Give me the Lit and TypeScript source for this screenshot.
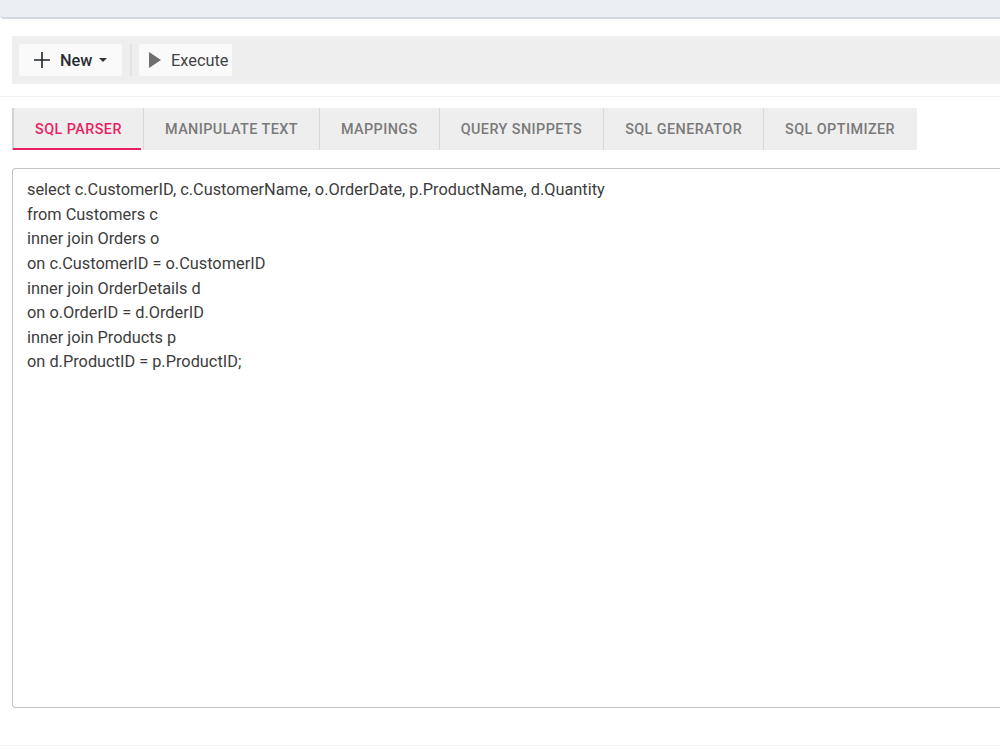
import { LitElement, html, css } from "lit";
import { customElement } from "lit/decorators.js";

const TABS = ["SQL PARSER", "MANIPULATE TEXT", "MAPPINGS", "QUERY SNIPPETS", "SQL GENERATOR", "SQL OPTIMIZER"];
const SQL = [
  "select c.CustomerID, c.CustomerName, o.OrderDate, p.ProductName, d.Quantity",
  "from Customers c",
  "inner join Orders o",
  "on c.CustomerID = o.CustomerID",
  "inner join OrderDetails d",
  "on o.OrderID = d.OrderID",
  "inner join Products p",
  "on d.ProductID = p.ProductID;",
];

@customElement("app-root")
export class AppRoot extends LitElement {
  static styles = css`
    :host { display: block; width: 1000px; height: 750px; overflow: hidden; background: #fff; font-family: Roboto, "Liberation Sans", sans-serif; color: #333; }
    .topbar { height: 17px; background: #ebeff3; border-bottom: 2px solid #d3d8e0; border-bottom-left-radius: 4px; }
    .main { padding: 17px 0 0 12px; }
    .toolbar { height: 48px; background: #eeeeee; display: flex; align-items: center; padding-left: 7px; box-sizing: border-box; }
    .btn { height: 32px; background: #fafafa; border-radius: 2px; display: flex; align-items: center; box-sizing: border-box; font-size: 16.33px; }
    .new { width: 103px; padding-left: 14px; gap: 9px; font-weight: 500; color: #2a2e33; }
    .caret { width: 0; height: 0; border-left: 4px solid transparent; border-right: 4px solid transparent; border-top: 4px solid #333; margin-left: -2px; }
    .sep { width: 2px; height: 32px; background: #e3e3e3; margin: 0 7px 0 8px; }
    .exec { width: 93px; padding-left: 10px; gap: 10px; color: #444; }
    .rule { height: 1px; background: #f1f1f1; margin: 12px 0 0 -12px; }
    .tabs { display: flex; margin-top: 11px; width: 905px; height: 42px; background: #eeeeee; font-size: 14.4px; font-weight: 500; letter-spacing: 0.42px; color: #7a7a7a; overflow: hidden; }
    .tab { flex: none; display: flex; align-items: center; justify-content: center; box-sizing: border-box; height: 42px; border-left: 1px solid #d5dae2; padding: 0 21px; white-space: nowrap; }
    .tab.active { color: #e91e63; border-left: 2px solid #cfd2d6; width: 131px; padding: 0; position: relative; }
    .tab.active::after { content: ""; position: absolute; left: -1px; right: 2px; bottom: 0; height: 2px; background: #e91e63; }
    .editor { margin-top: 18px; height: 540px; box-sizing: border-box; border: 1px solid #c4c4c4; border-right: none; border-radius: 4px 0 0 4px; padding: 9.25px 14px; font-size: 16.33px; line-height: 24.57px; color: #3d3d3d; }
    .footer { height: 1px; background: #f3f3f3; margin: 37px 0 0 -12px; }
  `;

  render() {
    return html`
      <div class="topbar"></div>
      <div class="main">
        <div class="toolbar">
          <div class="btn new">
            <svg width="18" height="18" viewBox="0 0 18 18"><path d="M9 1v16M1 9h16" stroke="#212529" stroke-width="1.6" fill="none"/></svg>
            <span>New</span><span class="caret"></span>
          </div>
          <div class="sep"></div>
          <div class="btn exec">
            <svg width="12" height="16" viewBox="0 0 12 16"><path d="M0 0l12 8-12 8z" fill="#6f6f6f"/></svg>
            <span>Execute</span>
          </div>
        </div>
        <div class="rule"></div>
        <div class="tabs">
          ${TABS.map((t, i) => html`<div class="tab ${i === 0 ? "active" : ""}">${t}</div>`)}
        </div>
        <div class="editor">${SQL.map((l) => html`<div>${l}</div>`)}</div>
        <div class="footer"></div>
      </div>
    `;
  }
}
